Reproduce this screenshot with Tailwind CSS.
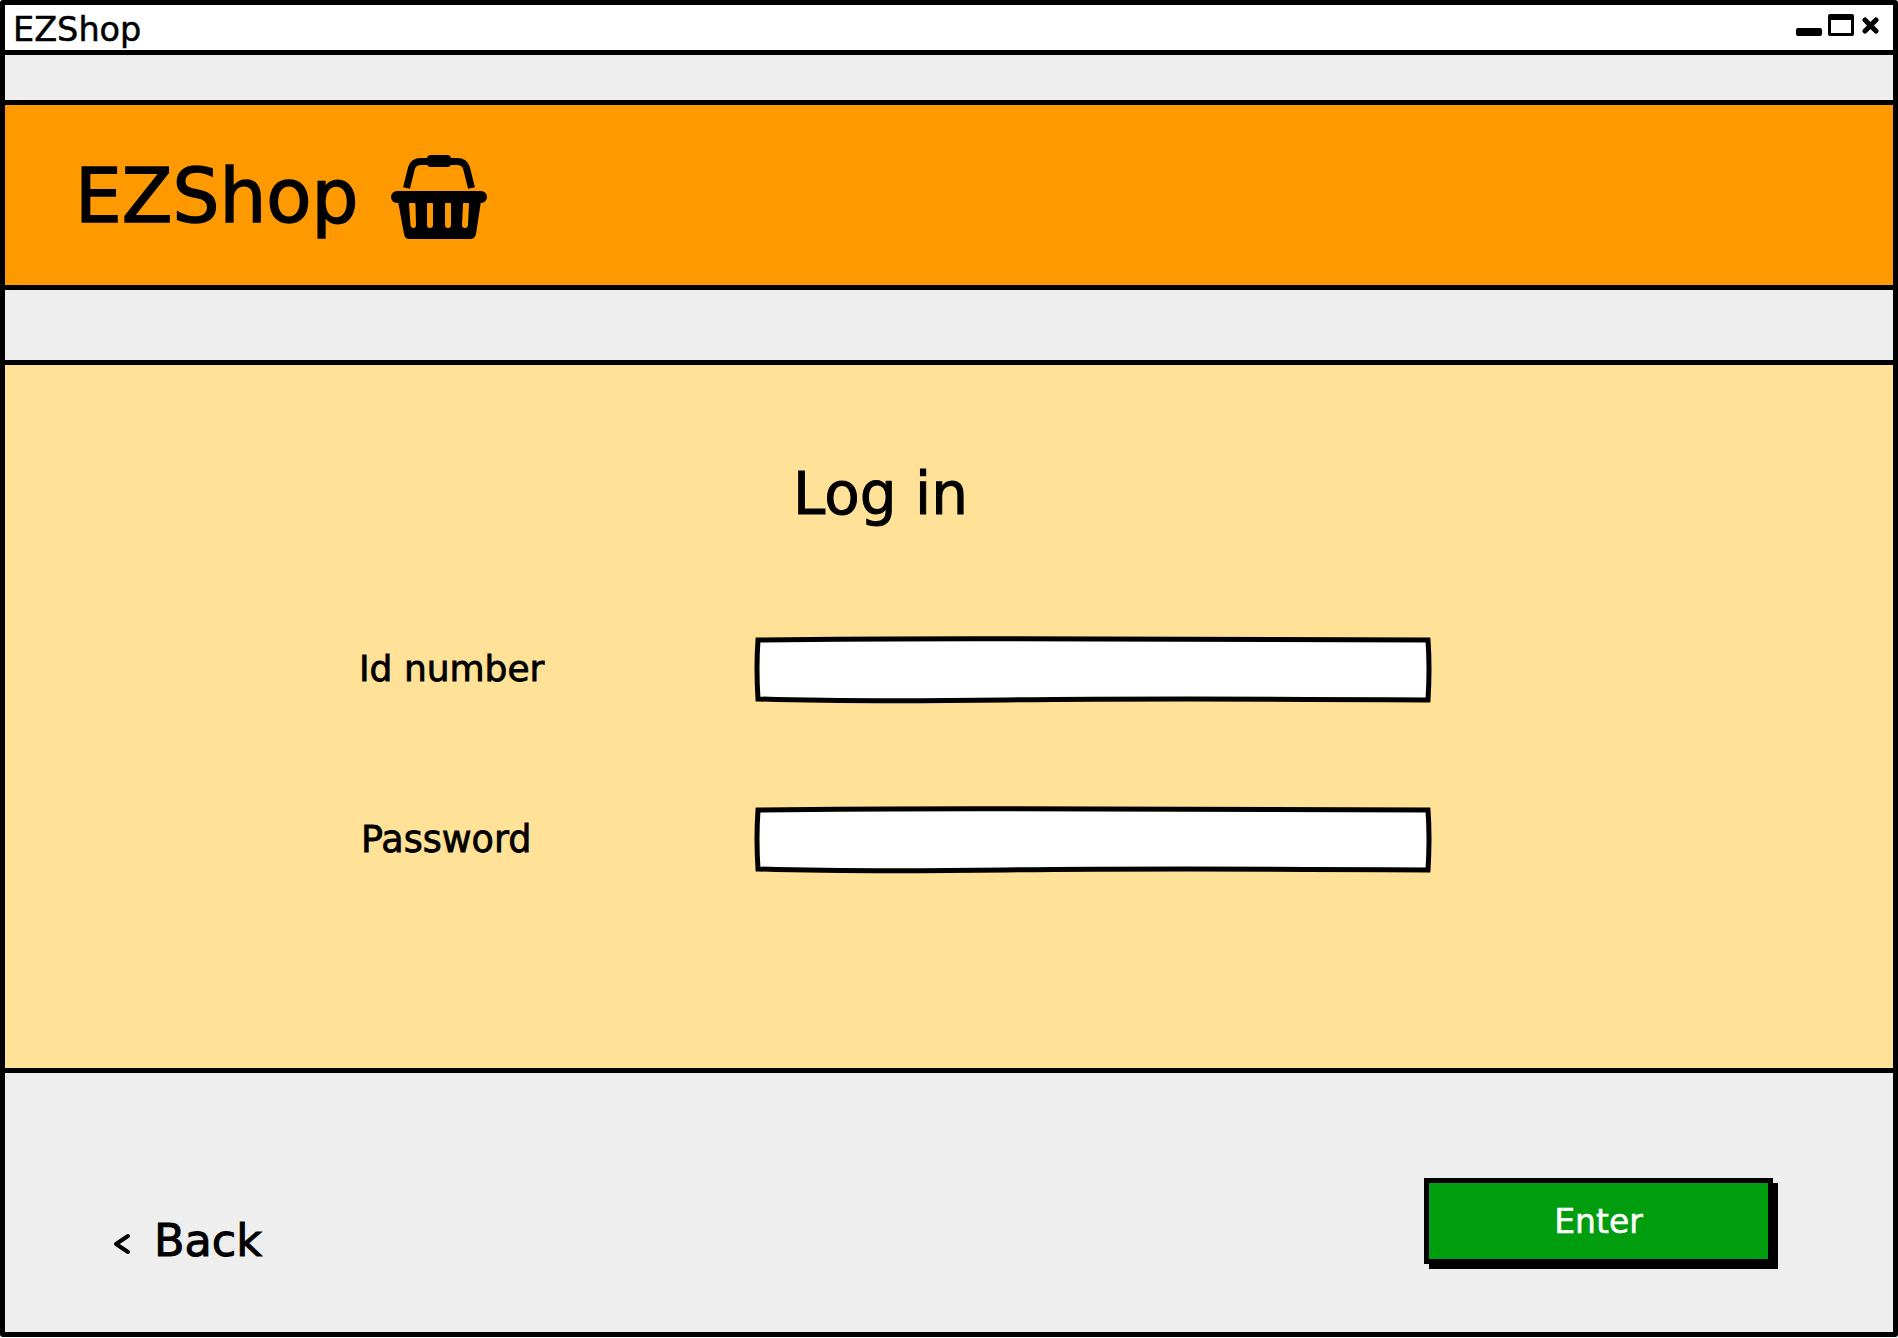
<!DOCTYPE html>
<html lang="en">

<head>
    <meta charset="UTF-8">
    <meta name="viewport" content="width=device-width, initial-scale=1.0">
    <title>EZShop</title>
    <script src="https://cdn.jsdelivr.net/npm/@tailwindcss/browser@4"></script>
</head>

<body class="bg-white font-['DejaVu_Sans',sans-serif] text-black">
    <div class="w-[1898px] h-[1337px] flex flex-col bg-[#eeeeee] border-t-[5px] border-x-[5px] border-b-[5px] border-black rounded-[3px] overflow-hidden">
        <!-- title bar -->
        <div class="h-[50px] shrink-0 flex items-start justify-between bg-white border-b-[5px] border-black pl-[8px] pr-[14px]">
            <span class="text-[33.5px] leading-[40px] mt-[5px] [-webkit-text-stroke:0.5px_black]">EZShop</span>
            <div class="flex items-start">
                <div class="w-[26px] h-[8px] mt-[23px] bg-black rounded-[2px]"></div>
                <div class="w-[26px] h-[22px] mt-[9px] ml-[6px] bg-white border-[3px] border-t-[6px] border-black rounded-[2px]"></div>
                <svg class="w-[17px] h-[17px] mt-[12px] ml-[8px]" viewBox="0 0 17 17" fill="none" stroke="black" stroke-width="5" stroke-linecap="round">
                    <path d="M3 3L14 14M14 3L3 14"></path>
                </svg>
            </div>
        </div>

        <div class="h-[45px] shrink-0"></div>

        <!-- header -->
        <div class="h-[190px] shrink-0 flex items-center bg-[#ff9900] border-y-[5px] border-black pl-[70px]">
            <span class="text-[74px] leading-[90px] mt-[1px] [-webkit-text-stroke:1.5px_black]">EZShop</span>
            <svg class="w-[96px] h-[84px] ml-[32px] mt-[3px]" viewBox="0 0 96 84" fill="black">
                <path d="M15.5 33L20.5 13Q22.5 6.500 30 6.500H66Q73.500 6.500 75.500 13L80.500 33" fill="none" stroke="black" stroke-width="7"></path>
                <rect x="36" y="0" width="24" height="12" rx="4"></rect>
                <rect x="0" y="36" width="96" height="12" rx="6"></rect>
                <path fill-rule="evenodd" d="M7 46H90L85 79Q84 84 79 84H18Q14 84 13 79ZM18 49L19.500 70Q20 73 22.500 73Q25 73 25 70L24.500 49Q24 47 21 47Q18 47 18 49ZM36 49V70Q36 73 39 73Q42 73 42 70V49Q42 47 39 47Q36 47 36 49ZM54 49V70Q54 73 57 73Q60 73 60 70V49Q60 47 57 47Q54 47 54 49ZM72 49L71 70Q71 73 74 73Q76.500 73 77 70L78 49Q78 47 75 47Q72 47 72 49Z"></path>
            </svg>
        </div>

        <div class="h-[70px] shrink-0"></div>

        <!-- login form -->
        <div class="h-[713px] shrink-0 bg-[#ffe197] border-y-[5px] border-black">
            <h1 class="text-[58px] leading-[72px] ml-[788px] mt-[93px] [-webkit-text-stroke:1px_black]">Log in</h1>
            <div class="flex items-center ml-[354px] mt-[108px]">
                <label class="w-[397px] text-[36px] leading-[64px] -mt-[3px] [-webkit-text-stroke:0.8px_black]">Id number</label>
                <svg class="w-[674px] h-[64px] overflow-visible" viewBox="0 0 674 64" fill="white" stroke="black" stroke-width="5">
                    <path d="M2 2Q150 0 340 1T672 2Q674 30 672 62Q400 60 250 62T2 61Q0 30 2 2Z"></path>
                </svg>
            </div>
            <div class="flex items-center ml-[354px] mt-[106px]">
                <label class="w-[397px] text-[36.5px] leading-[64px] -mt-[1px] pl-[2px] [-webkit-text-stroke:0.8px_black]">Password</label>
                <svg class="w-[674px] h-[64px] overflow-visible" viewBox="0 0 674 64" fill="white" stroke="black" stroke-width="5">
                    <path d="M2 2Q150 0 340 1T672 2Q674 30 672 62Q400 60 250 62T2 61Q0 30 2 2Z"></path>
                </svg>
            </div>
        </div>

        <!-- footer -->
        <div class="flex-1 flex items-start justify-between pl-[108px] pr-[120px]">
            <div class="flex items-center mt-[140px]">
                <svg class="w-[17px] h-[24px] mt-[6px]" viewBox="0 0 17 24" fill="none" stroke="black" stroke-width="4" stroke-linecap="round" stroke-linejoin="round">
                    <path d="M15 4L3 12L15 20"></path>
                </svg>
                <span class="text-[44.5px] leading-[56px] ml-[24px] [-webkit-text-stroke:1px_black]">Back</span>
            </div>
            <button class="w-[349px] h-[86px] mt-[105px] bg-[#009d0e] border-[5px] border-black shadow-[5px_5px_0_#000] text-white text-[33px] pt-[2px] [-webkit-text-stroke:0.5px_white]">Enter</button>
        </div>
    </div>
</body>

</html>
